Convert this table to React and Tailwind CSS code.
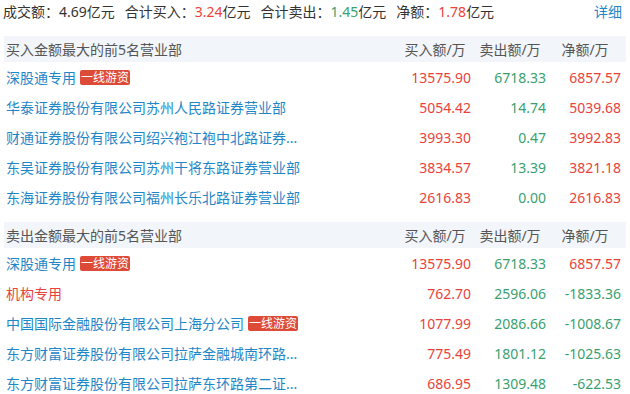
const buyRows = [
  { name: "深股通专用", tag: true, buy: "13575.90", sell: "6718.33", net: "6857.57" },
  { name: "华泰证券股份有限公司苏州人民路证券营业部", buy: "5054.42", sell: "14.74", net: "5039.68" },
  { name: "财通证券股份有限公司绍兴袍江袍中北路证券...", buy: "3993.30", sell: "0.47", net: "3992.83" },
  { name: "东吴证券股份有限公司苏州干将东路证券营业部", buy: "3834.57", sell: "13.39", net: "3821.18" },
  { name: "东海证券股份有限公司福州长乐北路证券营业部", buy: "2616.83", sell: "0.00", net: "2616.83" },
];

const sellRows = [
  { name: "深股通专用", tag: true, buy: "13575.90", sell: "6718.33", net: "6857.57" },
  { name: "机构专用", red: true, buy: "762.70", sell: "2596.06", net: "-1833.36" },
  { name: "中国国际金融股份有限公司上海分公司", tag: true, buy: "1077.99", sell: "2086.66", net: "-1008.67" },
  { name: "东方财富证券股份有限公司拉萨金融城南环路...", buy: "775.49", sell: "1801.12", net: "-1025.63" },
  { name: "东方财富证券股份有限公司拉萨东环路第二证...", buy: "686.95", sell: "1309.48", net: "-622.53" },
];

const RED = "text-[#e8433a]";
const GREEN = "text-[#3a9f70]";

function Section({ title, rows }) {
  return (
    <div>
      <div className="flex items-center h-[26px] ml-[4px] mr-[4px] bg-[#f2f5f9] text-[#555] text-[14px]">
        <div className="flex-1 pl-[2px]">{title}</div>
        <div className="w-[75px] text-center pl-[3px]">买入额/万</div>
        <div className="w-[75px] text-center pl-[3px]">卖出额/万</div>
        <div className="w-[75px] text-center pl-[3px] mr-[5px]">净额/万</div>
      </div>
      {rows.map((r, i) => (
        <div key={i} className="flex items-center h-[30px] text-[14px]">
          <div className="flex-1 flex items-center pl-[6px] whitespace-nowrap">
            <span className={r.red ? RED : "text-[#1f87c8]"}>{r.name}</span>
            {r.tag && (
              <span className="ml-[4px] h-[15px] leading-[15px] px-[1px] rounded-[2px] bg-[#dd4a38] text-white text-[12px]">
                一线游资
              </span>
            )}
          </div>
          <div className={"w-[75px] text-right " + RED}>{r.buy}</div>
          <div className={"w-[75px] text-right " + GREEN}>{r.sell}</div>
          <div className={"w-[75px] text-right mr-[9px] " + (r.net.startsWith("-") ? GREEN : RED)}>
            {r.net}
          </div>
        </div>
      ))}
    </div>
  );
}

export default function App() {
  return (
    <div
      className="w-[630px] h-[394px] overflow-hidden bg-white text-[#333]"
      style={{ fontFamily: '"Noto Sans", "Noto Sans CJK SC", sans-serif' }}
    >
      <div className="flex items-center h-[22px] pl-[3px] pr-[8px] text-[14px]">
        <span>成交额：4.69亿元</span>
        <span className="ml-[10px]">
          合计买入：<span className={RED}>3.24</span>亿元
        </span>
        <span className="ml-[10px]">
          合计卖出：<span className={GREEN}>1.45</span>亿元
        </span>
        <span className="ml-[10px]">
          净额：<span className={RED}>1.78</span>亿元
        </span>
        <span className="ml-auto text-[#1f87c8]">详细</span>
      </div>
      <div className="mt-[14px]">
        <Section title="买入金额最大的前5名营业部" rows={buyRows} />
      </div>
      <div className="mt-[10px]">
        <Section title="卖出金额最大的前5名营业部" rows={sellRows} />
      </div>
    </div>
  );
}
